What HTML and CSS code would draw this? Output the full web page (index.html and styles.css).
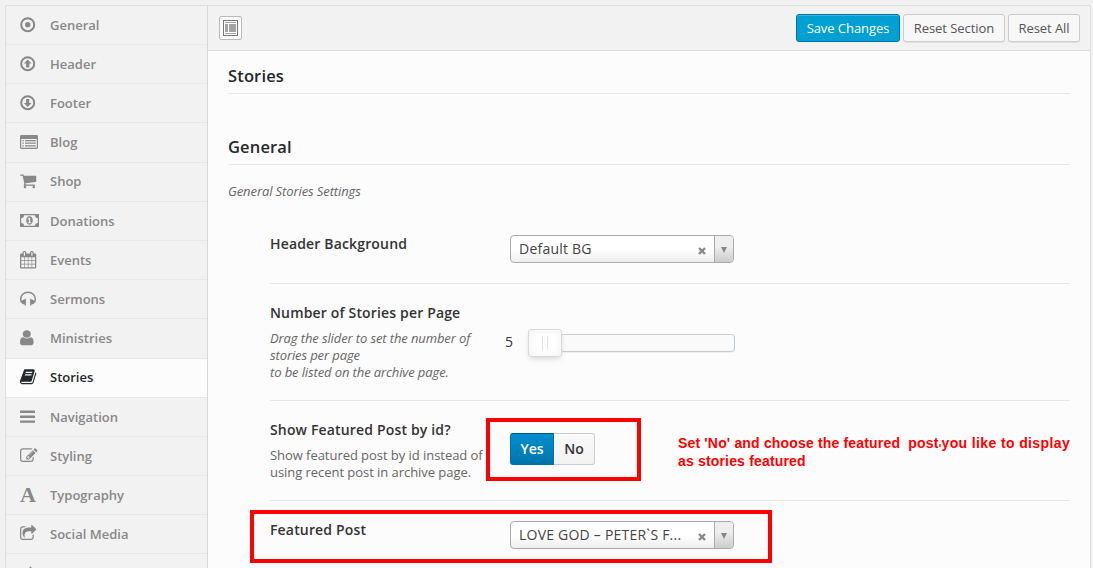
FILE: index.html
```html
<!DOCTYPE html>
<html lang="en">
<head>
<meta charset="utf-8">
<title>Stories</title>
<link rel="stylesheet" href="styles.css">
</head>
<body>
<div class="panel">
  <nav class="sidebar">
    <a class="item"><svg class="icon" viewBox="0 0 18 18"><circle cx="7.7" cy="8.7" r="6.5" fill="none" stroke="currentColor" stroke-width="2"/><circle cx="7.7" cy="8.7" r="2.7"/></svg><span>General</span></a>
    <a class="item"><svg class="icon" viewBox="0 0 18 18"><circle cx="7.7" cy="8.7" r="6.5" fill="none" stroke="currentColor" stroke-width="2"/><path d="M7.7 4.5l3.8 4H9.3v4H6.1v-4H3.9z"/></svg><span>Header</span></a>
    <a class="item"><svg class="icon" viewBox="0 0 18 18"><circle cx="7.7" cy="8.7" r="6.5" fill="none" stroke="currentColor" stroke-width="2"/><path d="M7.7 12.9l3.8-4H9.3v-4H6.1v4H3.9z"/></svg><span>Footer</span></a>
    <a class="item"><svg class="icon" viewBox="0 0 18 18"><path fill-rule="evenodd" d="M1.4 2h15.2Q18 2 18 3.4v11.2Q18 16 16.6 16H1.4Q0 16 0 14.6V3.4Q0 2 1.4 2zM1.2 6v8.3q0 .5.5.5h14.6q.5 0 .5-.5V6zM2.4 7h1.4v1.2H2.4zM5 7h10.8v1.2H5zM2.4 9.6h1.4v1.2H2.4zM5 9.6h10.8v1.2H5zM2.4 12.2h1.4v1.2H2.4zM5 12.2h10.8v1.2H5z"/></svg><span>Blog</span></a>
    <a class="item"><svg class="icon" viewBox="64 0 1843 1843"><path d="M704 1536q0 52-38 90t-90 38-90-38-38-90 38-90 90-38 90 38 38 90zm896 0q0 52-38 90t-90 38-90-38-38-90 38-90 90-38 90 38 38 90zm128-1088v512q0 24-16.500 42.500t-40.500 21.500l-1044 122q13 60 13 70 0 16-24 64h920q26 0 45 19t19 45-19 45-45 19h-1024q-26 0-45-19t-19-45q0-11 8-31.500t16-36 21.500-40 15.500-29.500l-177-823h-204q-26 0-45-19t-19-45 19-45 45-19h256q16 0 28.500 6.500t19.500 15.500 13 24.500 8 26 5.500 29.500 4.500 26h1201q26 0 45 19t19 45z"/></svg><span>Shop</span></a>
    <a class="item"><svg class="icon wide" viewBox="0 0 19 18"><path fill-rule="evenodd" d="M0 2h19v13H0zM4 3.200A2.800 2.800 0 0 1 1.200 6v5A2.800 2.800 0 0 1 4 13.800h11A2.800 2.800 0 0 1 17.800 11V6A2.800 2.800 0 0 1 15 3.200zM9.500 4.300c2.100 0 3.300 2 3.300 4.200s-1.200 4.200-3.300 4.200-3.300-2-3.300-4.200 1.200-4.200 3.300-4.200zM9 5.700L7.500 7l.7.800.7-.5V10.200H7.800v1h3.500v-1h-1.100V5.700z"/></svg><span>Donations</span></a>
    <a class="item"><svg class="icon" viewBox="64 0 1843 1843"><path d="M192 1664h288v-288h-288v288zm352 0h320v-288h-320v288zm-352-352h288v-320h-288v320zm352 0h320v-320h-320v320zm-352-384h288v-288h-288v288zm736 736h320v-288h-320v288zm-384-736h320v-288h-320v288zm768 736h288v-288h-288v288zm-384-352h320v-320h-320v320zm-352-864v-288q0-13-9.500-22.500t-22.500-9.500h-64q-13 0-22.500 9.500t-9.500 22.500v288q0 13 9.500 22.500t22.500 9.500h64q13 0 22.500-9.500t9.500-22.500zm736 864h288v-320h-288v320zm-384-384h320v-288h-320v288zm384 0h288v-288h-288v288zm32-480v-288q0-13-9.500-22.500t-22.500-9.500h-64q-13 0-22.500 9.500t-9.500 22.500v288q0 13 9.500 22.500t22.500 9.500h64q13 0 22.500-9.500t9.500-22.500zm384-64v1280q0 52-38 90t-90 38h-1408q-52 0-90-38t-38-90v-1280q0-52 38-90t90-38h128v-96q0-66 47-113t113-47h64q66 0 113 47t47 113v96h384v-96q0-66 47-113t113-47h64q66 0 113 47t47 113v96h128q52 0 90 38t38 90z"/></svg><span>Events</span></a>
    <a class="item"><svg class="icon" viewBox="0 0 18 18"><path d="M1.600 12.500C.8 11 .7 10.200.7 9.200.7 5.200 3.700 2.200 8 2.200s7.300 3 7.300 7c0 1-.1 1.800-.9 3.300" fill="none" stroke="currentColor" stroke-width="1.500"/><path d="M5.900 8.800v6.600H4.700v-.8C2.800 14.400 1.300 13.400 1.300 12s1.500-2.400 3.400-2.600v-.6zM10.100 8.800v6.600h1.200v-.8c1.900-.2 3.400-1.200 3.400-2.600s-1.500-2.400-3.400-2.600v-.6z"/></svg><span>Sermons</span></a>
    <a class="item"><svg class="icon" viewBox="256 0 1700 1843" preserveAspectRatio="none"><path d="M1536 1399q0 109-62.500 187t-150.500 78h-854q-88 0-150.500-78t-62.500-187q0-85 8.500-160.500t31.500-152 58.500-131 94-89 134.500-34.500q131 128 313 128t313-128q76 0 134.500 34.500t94 89 58.500 131 31.500 152 8.500 160.500zm-256-887q0 159-112.500 271.500t-271.500 112.500-271.500-112.500-112.500-271.500 112.500-271.500 271.500-112.500 271.500 112.500 112.500 271.500z"/></svg><span>Ministries</span></a>
    <a class="item active"><svg class="icon" viewBox="64 0 1843 1843"><path d="M1703 478q40 57 18 129l-275 906q-19 64-76.500 107.500t-122.500 43.500h-923q-77 0-148.500-53.500t-99.500-131.500q-24-67-2-127 0-4 3-27t4-37q1-8-3-21.500t-3-19.500q2-11 8-21t16.500-23.500 16.500-23.500q23-38 45-91.500t30-91.500q3-10 .5-30t-.5-28q3-11 17-28t17-23q21-36 42-92t25-90q1-9-2.500-32t.5-28q4-13 22-30.500t22-22.500q19-26 42.500-84.500t27.500-96.500q1-8-3-25.500t-2-26.500q2-8 9-18t18-23 17-21q8-12 16.500-30.500t15-35 16-36 19.500-32 26.500-23.500 36-11.500 47.500 5.500l-1 3q38-9 51-9h761q74 0 114 56t18 130l-274 906q-36 119-71.500 153.500t-128.500 34.500h-869q-27 0-38 15-11 16-1 43 24 70 144 70h923q29 0 56-15.500t35-41.500l300-987q7-22 5-57 38 15 59 43zm-1064 2q-4 13 2 22.500t20 9.500h608q13 0 25.500-9.500t16.500-22.500l21-64q4-13-2-22.500t-20-9.500h-608q-13 0-25.500 9.500t-16.500 22.500zm-83 256q-4 13 2 22.500t20 9.500h608q13 0 25.500-9.500t16.500-22.500l21-64q4-13-2-22.500t-20-9.500h-608q-13 0-25.500 9.500t-16.500 22.500z"/></svg><span>Stories</span></a>
    <a class="item"><svg class="icon" viewBox="0 0 18 18"><rect y="2.600" width="15" height="2.400" rx=".5"/><rect y="7.500" width="15" height="2.400" rx=".5"/><rect y="12.400" width="15" height="2.400" rx=".5"/></svg><span>Navigation</span></a>
    <a class="item"><svg class="icon" viewBox="0 0 1843 1843"><path d="M888 1184l116-116-152-152-116 116v56h96v96h56zm440-720q-16-16-33 1l-350 350q-17 17-1 33t33-1l350-350q17-17 1-33zm80 594v190q0 119-84.500 203.500t-203.500 84.500h-832q-119 0-203.500-84.500t-84.500-203.500v-832q0-119 84.500-203.500t203.500-84.500h832q63 0 117 25 15 7 18 23 3 17-9 29l-49 49q-14 14-32 8-23-6-45-6h-832q-66 0-113 47t-47 113v832q0 66 47 113t113 47h832q66 0 113-47t47-113v-126q0-13 9-22l64-64q15-15 35-7t20 29zm-96-738l288 288-672 672h-288v-288zm444 132l-92 92-288-288 92-92q28-28 68-28t68 28l152 152q28 28 28 68t-28 68z"/></svg><span>Styling</span></a>
    <a class="item"><span class="icon letter">A</span><span>Typography</span></a>
    <a class="item"><svg class="icon" viewBox="64 0 1843 1843"><path d="M1472 989v259q0 119-84.500 203.500t-203.500 84.500h-832q-119 0-203.500-84.500t-84.500-203.500v-832q0-119 84.500-203.500t203.500-84.500h255q13 0 22.500 9.500t9.500 22.500q0 27-26 32-77 26-133 60-10 4-16 4h-112q-66 0-113 47t-47 113v832q0 66 47 113t113 47h832q66 0 113-47t47-113v-214q0-19 18-29 28-13 54-37 16-16 35-8 21 9 21 29zm237-496l-384 384q-18 19-45 19-12 0-25-5-39-17-39-59v-192h-160q-323 0-438 131-119 137-74 473 3 23-20 34-8 2-12 2-16 0-26-13-10-14-21-31t-39.500-68.500-49.500-99.500-38.500-114-17.500-122q0-49 3.500-91t14-90 28-88 47-81.500 68.500-74 94.500-61.500 124.500-48.500 159.500-30.500 196.500-11h160v-192q0-42 39-59 13-5 25-5 26 0 45 19l384 384q19 19 19 45t-19 45z"/></svg><span>Social Media</span></a>
    <a class="item"><svg class="icon" viewBox="0 0 18 18"><path d="M10.500 2.300l4.500 5.700H6z"/></svg></a>
  </nav>
  <main class="main">
    <header class="toolbar">
      <button class="layout-toggle" aria-label="Expand"><svg width="15" height="16" viewBox="0 0 15 16"><rect x=".5" y=".5" width="14" height="15" fill="#fff" stroke="#777"/><path fill="#a3a3a3" d="M2 2h11v1H2zM2 4h3v8H2zM6 4h7v8H6zM2 13h11v1H2z"/></svg></button>
      <button class="btn primary">Save Changes</button>
      <button class="btn section">Reset Section</button>
      <button class="btn all">Reset All</button>
    </header>
    <section class="content">
      <h2 class="title">Stories</h2>
      <h2 class="title second">General</h2>
      <p class="intro">General Stories Settings</p>
      <div class="fields">
        <div class="row bg-row">
          <div class="label"><h3>Header Background</h3></div>
          <div class="select"><span class="value">Default BG</span><svg class="clear" viewBox="0 0 8 8"><path d="M1 1l6 6M7 1L1 7"/></svg><span class="arrow"></span></div>
        </div>
        <div class="row count-row">
          <div class="label"><h3>Number of Stories per Page</h3><p class="em">Drag the slider to set the number of stories per page<br>to be listed on the archive page.</p></div>
          <div class="slider"><span class="count">5</span><div class="track"><div class="handle"></div></div></div>
        </div>
        <div class="row show-row">
          <div class="label"><h3>Show Featured Post by id?</h3><p>Show featured post by id instead of using recent post in archive page.</p></div>
          <div class="switch"><span class="yes">Yes</span><span class="no">No</span></div>
        </div>
        <div class="row post-row">
          <div class="label"><h3>Featured Post</h3></div>
          <div class="select"><span class="value">LOVE GOD – PETER`S F...</span><svg class="clear" viewBox="0 0 8 8"><path d="M1 1l6 6M7 1L1 7"/></svg><span class="arrow"></span></div>
        </div>
      </div>
    </section>
  </main>
</div>
<div class="mark mark-switch"></div>
<div class="mark mark-post"></div>
<div class="note"><div class="note-line"><span>Set 'No' and choose the featured&nbsp; post</span><i class="dot"></i><span class="loose">you like to display</span></div><div>as stories featured</div></div>
</body>
</html>
```
FILE: styles.css
```css
* { box-sizing: border-box; }
body {
  margin: 0;
  height: 568px;
  overflow: hidden;
  position: relative;
  padding: 5px 2px 0 5px;
  background: #f1f1f1;
  font-family: "Open Sans", sans-serif;
  font-size: 13px;
  color: #666;
}
.panel {
  display: flex;
  height: 563px;
  overflow: hidden;
  border: 1px solid #dedede;
  border-bottom: 0;
  background: #fcfcfc;
}
.sidebar {
  width: 202px;
  flex: none;
  background: #f2f2f2;
  border-right: 1px solid #d8d8d8;
}
.item:first-child { margin-top: -0.2px; }
.item {
  display: flex;
  height: 39.2px;
  padding: 0 0 0.4px 14px;
  align-items: center;
  border-bottom: 1px solid #e7e7e7;
  color: #888;
  font-weight: 600;
  line-height: 18px;
}
.item.active { background: #fcfcfc; color: #23282d; }
.icon {
  width: 18px;
  height: 18px;
  margin-right: 12px;
  flex: none;
  fill: currentColor;
}
.icon.wide { width: 19px; margin-right: 11px; }
.letter { font: bold 22px/18px "Liberation Serif", serif; }
.main { flex: 1; min-width: 0; }
.toolbar {
  display: flex;
  align-items: center;
  gap: 3px;
  height: 45px;
  padding: 0 10px 0 11px;
  background: #f2f2f2;
  border-bottom: 1px solid #dcdcdc;
}
.layout-toggle {
  display: flex;
  align-items: center;
  justify-content: center;
  width: 23px;
  height: 24px;
  padding: 0;
  margin-right: auto;
  border: 1px solid #bbb;
  border-radius: 2px;
  background: #fafafa;
}
.btn {
  height: 28px;
  padding: 0;
  border: 1px solid #ccc;
  border-radius: 3px;
  background: #f7f7f7;
  box-shadow: 0 1px 0 rgba(0, 0, 0, 0.06);
  font: 13px/26px "Open Sans", sans-serif;
  letter-spacing: -0.06px;
  color: #555;
}
.btn.primary {
  width: 104px;
  border-color: #0073aa;
  background: #00a0d2;
  box-shadow: inset 0 1px 0 rgba(120, 200, 230, 0.5);
  color: #fff;
}
.btn.section { width: 102px; }
.btn.all { width: 72px; }
.content { padding: 14px 20px 0; }
.title {
  margin: 0;
  height: 29px;
  border-bottom: 1px solid #e7e7e7;
  font-size: 16.5px;
  line-height: 21px;
  font-weight: 600;
  color: #23282d;
  letter-spacing: 0.15px;
}
.title.second { margin-top: 42px; }
.intro { margin: 16px 0 0; line-height: 20px; font-style: italic; letter-spacing: -0.1px; }
.fields { padding-left: 42px; margin-top: 14px; }
.row { display: flex; border-bottom: 1px solid #e7e7e7; }
.label { width: 240px; flex: none; padding-right: 24px; }
.label h3 { margin: 0; font-size: 14px; line-height: 20px; font-weight: 600; letter-spacing: 0.16px; color: #333; }
.label p { margin: 7px -6px 0 0; line-height: 17px; letter-spacing: -0.05px; }
.label .em { font-style: italic; letter-spacing: -0.11px; }
.bg-row { height: 69px; padding-top: 19px; }
.count-row { height: 117px; padding-top: 19px; }
.show-row { height: 100px; padding-top: 19px; }
.post-row { height: 60px; padding-top: 19px; border-bottom: 0; }
.select {
  display: flex;
  align-items: center;
  width: 224px;
  height: 28px;
  margin-top: 1px;
  padding-left: 8px;
  border: 1px solid #aaa;
  border-radius: 4px;
  background: linear-gradient(#fff 50%, #eee);
  overflow: hidden;
  font-size: 14px;
  line-height: 26px;
  letter-spacing: 0.22px;
  color: #444;
}
.value { flex: 1; white-space: nowrap; }
.clear { width: 8px; height: 8px; margin: 4px 8px 0 0; stroke: #888; stroke-width: 2.4; }
.arrow {
  display: flex;
  align-items: center;
  justify-content: center;
  width: 19px;
  height: 26px;
  border-left: 1px solid #aaa;
  background: linear-gradient(#eee 40%, #ccc);
}
.arrow::after { content: ""; margin-top: 2px; border: 3px solid transparent; border-top: 6px solid #888; border-bottom: 0; }
.slider { display: flex; margin: 30px 0 0 -5px; height: 20px; align-items: center; }
.count { width: 24px; font-size: 14px; line-height: 20px; color: #333; margin-top: -3px; }
.track {
  width: 206px;
  height: 18px;
  display: flex;
  align-items: center;
  border: 1px solid #ccc;
  border-right-color: #b5c9d3;
  border-radius: 4px;
  background: #fafafa;
  box-shadow: 0 1px 1px #eee;
}
.handle {
  width: 34px;
  height: 28px;
  margin-left: -2px;
  flex: none;
  border: 1px solid #d9d9d9;
  border-radius: 3px;
  background: #fff;
  box-shadow: inset 0 0 8px #f0f0f0, 0 3px 6px -2px #ccc;
  display: flex;
  align-items: center;
  justify-content: center;
}
.handle::after { content: ""; width: 4px; height: 14px; border: solid #e2e2e2; border-width: 0 1px; }
.switch { display: flex; margin-top: 13px; height: 32px; font-size: 14px; font-weight: 600; line-height: 30px; text-align: center; }
.yes { width: 44px; border: 1px solid #0073aa; border-top-color: #00557f; border-radius: 3px 0 0 3px; background: linear-gradient(#008fd0, #0074aa); color: #fff; }
.no { width: 41px; border: 1px solid #ccc; border-left: 0; border-radius: 0 3px 3px 0; background: linear-gradient(#fafafa, #f2f2f2); color: #333; }
.mark { position: absolute; border: 4px solid #f00; }
.mark-switch { left: 486px; top: 418px; width: 155px; height: 63px; }
.mark-post { left: 250px; top: 510px; width: 522px; height: 53px; }
.note {
  position: absolute;
  left: 678px;
  top: 434px;
  font: bold 14px/18px "Liberation Sans", sans-serif;
  letter-spacing: 0.17px;
  color: #f00;
  white-space: nowrap;
}
.note-line { display: flex; }
.loose { letter-spacing: 0.38px; }
.dot { width: 2px; height: 3px; margin: 10px 0 0 1px; background: #f55; }
```
